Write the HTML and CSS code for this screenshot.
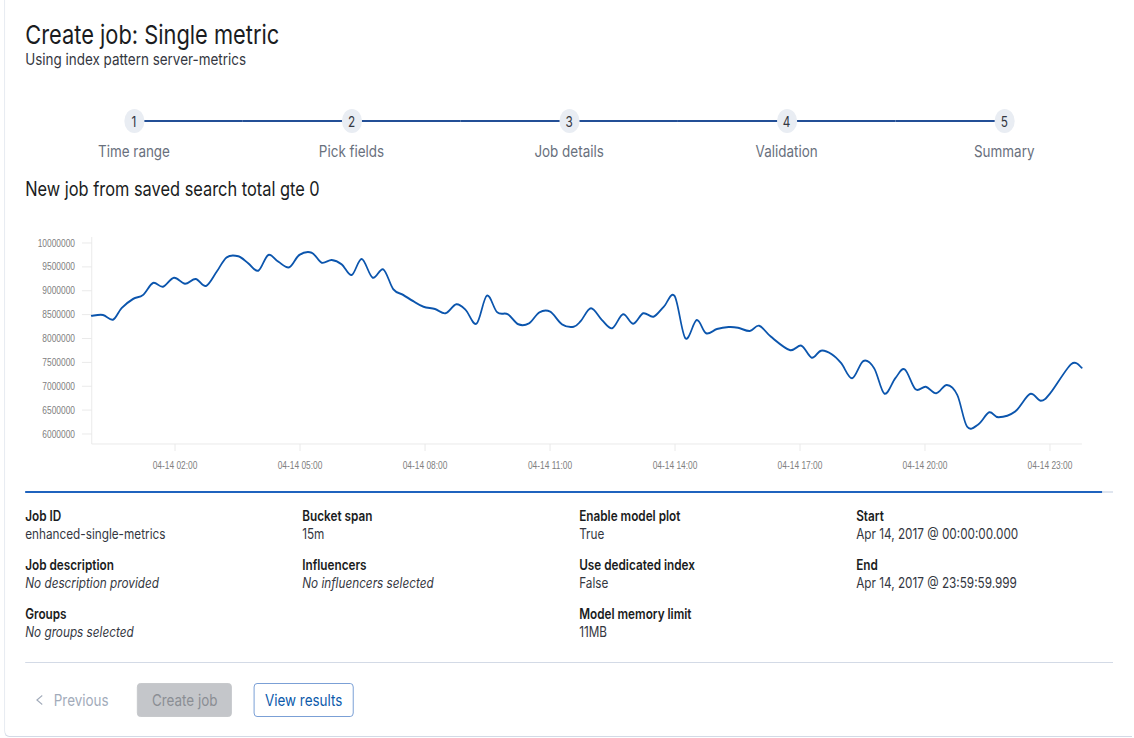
FILE: index.html
```html
<!DOCTYPE html>
<html lang="en">
<head>
<meta charset="utf-8">
<title>Create job: Single metric</title>
<link rel="stylesheet" href="styles.css">
</head>
<body>
<div class="viewport">
<div class="page">
  <div class="panel">
    <h1 class="title">Create job: Single metric</h1>
    <p class="subtitle">Using index pattern server-metrics</p>

    <ol class="steps">
      <li class="step"><span class="step-num">1</span><span class="step-label">Time range</span></li>
      <li class="step"><span class="step-num">2</span><span class="step-label">Pick fields</span></li>
      <li class="step"><span class="step-num">3</span><span class="step-label">Job details</span></li>
      <li class="step"><span class="step-num">4</span><span class="step-label">Validation</span></li>
      <li class="step"><span class="step-num">5</span><span class="step-label">Summary</span></li>
    </ol>

    <h2 class="section-title">New job from saved search total gte 0</h2>

    <svg class="chart" width="1295" height="263" viewBox="30 228 1295 263" xmlns="http://www.w3.org/2000/svg">
      <g class="axis">
        <line x1="109.2" y1="237" x2="109.2" y2="444"/>
        <line x1="109.2" y1="444" x2="1288" y2="444"/>
        <line x1="97.6" y1="243" x2="109.2" y2="243"/>
        <line x1="97.6" y1="266.9" x2="109.2" y2="266.9"/>
        <line x1="97.6" y1="290.75" x2="109.2" y2="290.75"/>
        <line x1="97.6" y1="314.6" x2="109.2" y2="314.6"/>
        <line x1="97.6" y1="338.5" x2="109.2" y2="338.5"/>
        <line x1="97.6" y1="362.4" x2="109.2" y2="362.4"/>
        <line x1="97.6" y1="386.25" x2="109.2" y2="386.25"/>
        <line x1="97.6" y1="410.1" x2="109.2" y2="410.1"/>
        <line x1="97.6" y1="434" x2="109.2" y2="434"/>
        <line x1="208.4" y1="444" x2="208.4" y2="451"/>
        <line x1="357.2" y1="444" x2="357.2" y2="451"/>
        <line x1="506" y1="444" x2="506" y2="451"/>
        <line x1="654.8" y1="444" x2="654.8" y2="451"/>
        <line x1="803.6" y1="444" x2="803.6" y2="451"/>
        <line x1="952.4" y1="444" x2="952.4" y2="451"/>
        <line x1="1101.2" y1="444" x2="1101.2" y2="451"/>
        <line x1="1250" y1="444" x2="1250" y2="451"/>
      </g>
      <g class="ylabels">
        <text x="89.3" y="246.6">10000000</text>
        <text x="89.3" y="270.5">9500000</text>
        <text x="89.3" y="294.4">9000000</text>
        <text x="89.3" y="318.2">8500000</text>
        <text x="89.3" y="342.1">8000000</text>
        <text x="89.3" y="366">7500000</text>
        <text x="89.3" y="389.9">7000000</text>
        <text x="89.3" y="413.7">6500000</text>
        <text x="89.3" y="437.6">6000000</text>
      </g>
      <g class="xlabels">
        <text x="208.4" y="468.6">04-14 02:00</text>
        <text x="357.2" y="468.6">04-14 05:00</text>
        <text x="506" y="468.6">04-14 08:00</text>
        <text x="654.8" y="468.6">04-14 11:00</text>
        <text x="803.6" y="468.6">04-14 14:00</text>
        <text x="952.4" y="468.6">04-14 17:00</text>
        <text x="1101.2" y="468.6">04-14 20:00</text>
        <text x="1250" y="468.6">04-14 23:00</text>
      </g>
      <path id="series" class="series" d=""/>
    </svg>

    <div class="progress"><div class="progress-fill" style="width:99%"></div></div>

    <div class="details">
      <div class="col">
        <div class="item"><div class="item-title">Job ID</div><div class="item-value">enhanced-single-metrics</div></div>
        <div class="item"><div class="item-title">Job description</div><div class="item-value empty">No description provided</div></div>
        <div class="item"><div class="item-title">Groups</div><div class="item-value empty">No groups selected</div></div>
      </div>
      <div class="col">
        <div class="item"><div class="item-title">Bucket span</div><div class="item-value">15m</div></div>
        <div class="item"><div class="item-title">Influencers</div><div class="item-value empty">No influencers selected</div></div>
      </div>
      <div class="col">
        <div class="item"><div class="item-title">Enable model plot</div><div class="item-value">True</div></div>
        <div class="item"><div class="item-title">Use dedicated index</div><div class="item-value">False</div></div>
        <div class="item"><div class="item-title">Model memory limit</div><div class="item-value">11MB</div></div>
      </div>
      <div class="col">
        <div class="item"><div class="item-title">Start</div><div class="item-value">Apr 14, 2017 @ 00:00:00.000</div></div>
        <div class="item"><div class="item-title">End</div><div class="item-value">Apr 14, 2017 @ 23:59:59.999</div></div>
      </div>
    </div>

    <hr class="divider">

    <div class="footer">
      <button class="btn-empty" disabled>
        <svg class="chev" width="16" height="16" viewBox="0 0 16 16"><path d="M12.3 3.4 L6 8 L12.3 12.6"/></svg>
        <span>Previous</span>
      </button>
      <button class="btn btn-disabled" disabled>Create job</button>
      <button class="btn btn-outline">View results</button>
    </div>
  </div>
</div>
</div>
<script src="chart.js"></script>
</body>
</html>
```

FILE: styles.css
```css
html, body {
  margin: 0;
  padding: 0;
  background: #ffffff;
  overflow: hidden;
}

body {
  font-family: Inter, "Noto Sans", sans-serif;
  color: #343741;
}

.viewport {
  width: 1134px;
  height: 738px;
  overflow: hidden;
}

/* the reference capture is horizontally compressed; lay out at natural width and compress */
.page {
  width: 1348px;
  transform: scaleX(0.84);
  transform-origin: 0 0;
}

.panel {
  margin-left: 5px;
  border-left: 1px solid #d3dae6;
  border-bottom: 1px solid #d3dae6;
  border-bottom-left-radius: 6px;
  padding: 20px 23px 19px 24px;
}

.title {
  margin: 0;
  font-size: 26px;
  line-height: 30px;
  font-weight: 400;
  color: #1a1c21;
}

.subtitle {
  margin: 0;
  font-size: 16px;
  line-height: 18px;
  color: #343741;
}

/* steps */
.steps {
  list-style: none;
  margin: 41px 0 0;
  padding: 0;
  display: flex;
}

.step {
  flex: 1;
  display: flex;
  flex-direction: column;
  align-items: center;
  position: relative;
}

.step::before,
.step::after {
  content: "";
  position: absolute;
  top: 11px;
  height: 2px;
  background: #234f96;
}

.step::before { left: 0; right: 50%; }
.step::after { left: 50%; right: 0; }
.step:first-child::before,
.step:last-child::after { display: none; }

.step-num {
  position: relative;
  z-index: 1;
  width: 24px;
  height: 24px;
  border-radius: 50%;
  background: #e9edf3;
  color: #343741;
  font-size: 14px;
  display: flex;
  align-items: center;
  justify-content: center;
}

.step-label {
  margin-top: 8px;
  font-size: 16px;
  line-height: 20px;
  color: #69707d;
}

.section-title {
  margin: 16px 0 0;
  font-size: 19.5px;
  line-height: 24px;
  font-weight: 400;
  color: #1a1c21;
}

/* chart */
.chart {
  display: block;
  margin-top: 27px;
}

.axis line {
  stroke: #e8e8e8;
  stroke-width: 1;
}

.ylabels text,
.xlabels text {
  font-family: "Liberation Sans", Arial, sans-serif;
  font-size: 10px;
  fill: #808080;
}

.ylabels text { text-anchor: end; }
.xlabels text { text-anchor: middle; }

.series {
  fill: none;
  stroke: #0b55ad;
  stroke-width: 2;
  stroke-linejoin: round;
  stroke-linecap: round;
}

.progress {
  height: 2px;
  background: #dfe5ef;
}

.progress-fill {
  height: 100%;
  background: #1f63be;
}

/* details */
.details {
  margin-top: 14px;
  display: grid;
  grid-template-columns: repeat(4, 1fr);
  column-gap: 24px;
}

.col {
  display: flex;
  flex-direction: column;
  gap: 13px;
}

.item-title {
  font-size: 14px;
  line-height: 18px;
  font-weight: 600;
  color: #1a1c21;
}

.item-value {
  font-size: 14px;
  line-height: 18px;
  color: #343741;
}

.item-value.empty {
  font-style: italic;
}

.divider {
  margin: 21px 0 0;
  border: 0;
  height: 1px;
  background: #d3dae6;
}

/* footer buttons */
.footer {
  margin-top: 20px;
  display: flex;
  align-items: center;
  gap: 26px;
}

.btn-empty {
  height: 34px;
  padding: 0 8px;
  border: 0;
  background: none;
  display: flex;
  align-items: center;
  gap: 10px;
  font-family: inherit;
  font-size: 16px;
  color: #a2abba;
}

.chev path {
  fill: none;
  stroke: currentColor;
  stroke-width: 1.3;
}

.btn {
  height: 34px;
  min-width: 113px;
  padding: 0 12px;
  border-radius: 4px;
  font-family: inherit;
  font-size: 16px;
  box-sizing: border-box;
}

.btn-disabled {
  border: 1px solid #c4c6ca;
  background: #c4c6ca;
  color: #8b8e94;
}

.btn-outline {
  border: 1px solid #6f98d2;
  background: #ffffff;
  color: #0b5aab;
}
```

FILE: chart.js
```js
(function () {
  // traced series, in screen pixels of the compressed capture (x, y)
  var S = 0.84;
  var pts = [
    [91.7,315.7],[103,315],[113,319.7],[121.7,308],[133,299],[143,295],[153,283],[163,286.7],
    [174,277.7],[185,283.7],[195.7,279],[206,286],[216.7,271.7],[226.7,257.3],[238.3,256.3],
    [248.3,263.3],[258.3,270.7],[268.3,255],[278.3,261.7],[289.3,267.3],[299.3,255],[311.7,252.7],
    [321.7,262.7],[331.7,260],[341.7,264.3],[351.7,275],[361.7,259],[372.7,277.7],[383.3,269.3],
    [393.3,289.3],[403.3,295],[413,301],[423.5,306.7],[435,309],[445.5,313.3],[456.3,304.3],
    [465.7,310],[476.5,323.7],[486.9,295.7],[497.2,312.3],[508,314.3],[518.3,324.3],[529,323.3],
    [539.4,312.3],[550.2,311.7],[562,324.3],[573.7,326.7],[580.8,321],[591,308.3],[601.9,320],
    [612.2,328.3],[623,314.3],[633.3,323.7],[643.2,313.3],[653.5,316.7],[663.8,306.7],[674.6,296],
    [685.4,338.3],[696.7,320],[706.1,333.3],[716.9,329],[728.6,327],[738,327.7],[749.8,331],
    [759.2,325.7],[770.9,336.7],[789.7,350],[801.4,345.7],[811.7,357.7],[821.1,350.7],[831.9,354.3],
    [841.3,363.3],[852.1,378.3],[863.4,361],[874.2,368.3],[884.5,393.7],[895.3,378.3],[904.7,369.3],
    [915.5,389.3],[925.8,386.7],[936.2,393.3],[946.9,385],[957.3,395],[967.1,426.7],[978.4,424.3],
    [989.2,412.3],[998.6,417.3],[1015,411.7],[1030,394],[1040.8,400.7],[1050.2,393.3],[1071.4,364],
    [1081.7,367.7]
  ];
  var p = pts.map(function (q) { return [q[0] / S, q[1]]; });
  function f(n) { return n.toFixed(2); }
  var d = 'M' + f(p[0][0]) + ',' + f(p[0][1]);
  for (var i = 0; i < p.length - 1; i++) {
    var p0 = p[i - 1] || p[i], p1 = p[i], p2 = p[i + 1], p3 = p[i + 2] || p2;
    var c1x = p1[0] + (p2[0] - p0[0]) / 6, c1y = p1[1] + (p2[1] - p0[1]) / 6;
    var c2x = p2[0] - (p3[0] - p1[0]) / 6, c2y = p2[1] - (p3[1] - p1[1]) / 6;
    d += 'C' + f(c1x) + ',' + f(c1y) + ' ' + f(c2x) + ',' + f(c2y) + ' ' + f(p2[0]) + ',' + f(p2[1]);
  }
  document.getElementById('series').setAttribute('d', d);
})();
```
